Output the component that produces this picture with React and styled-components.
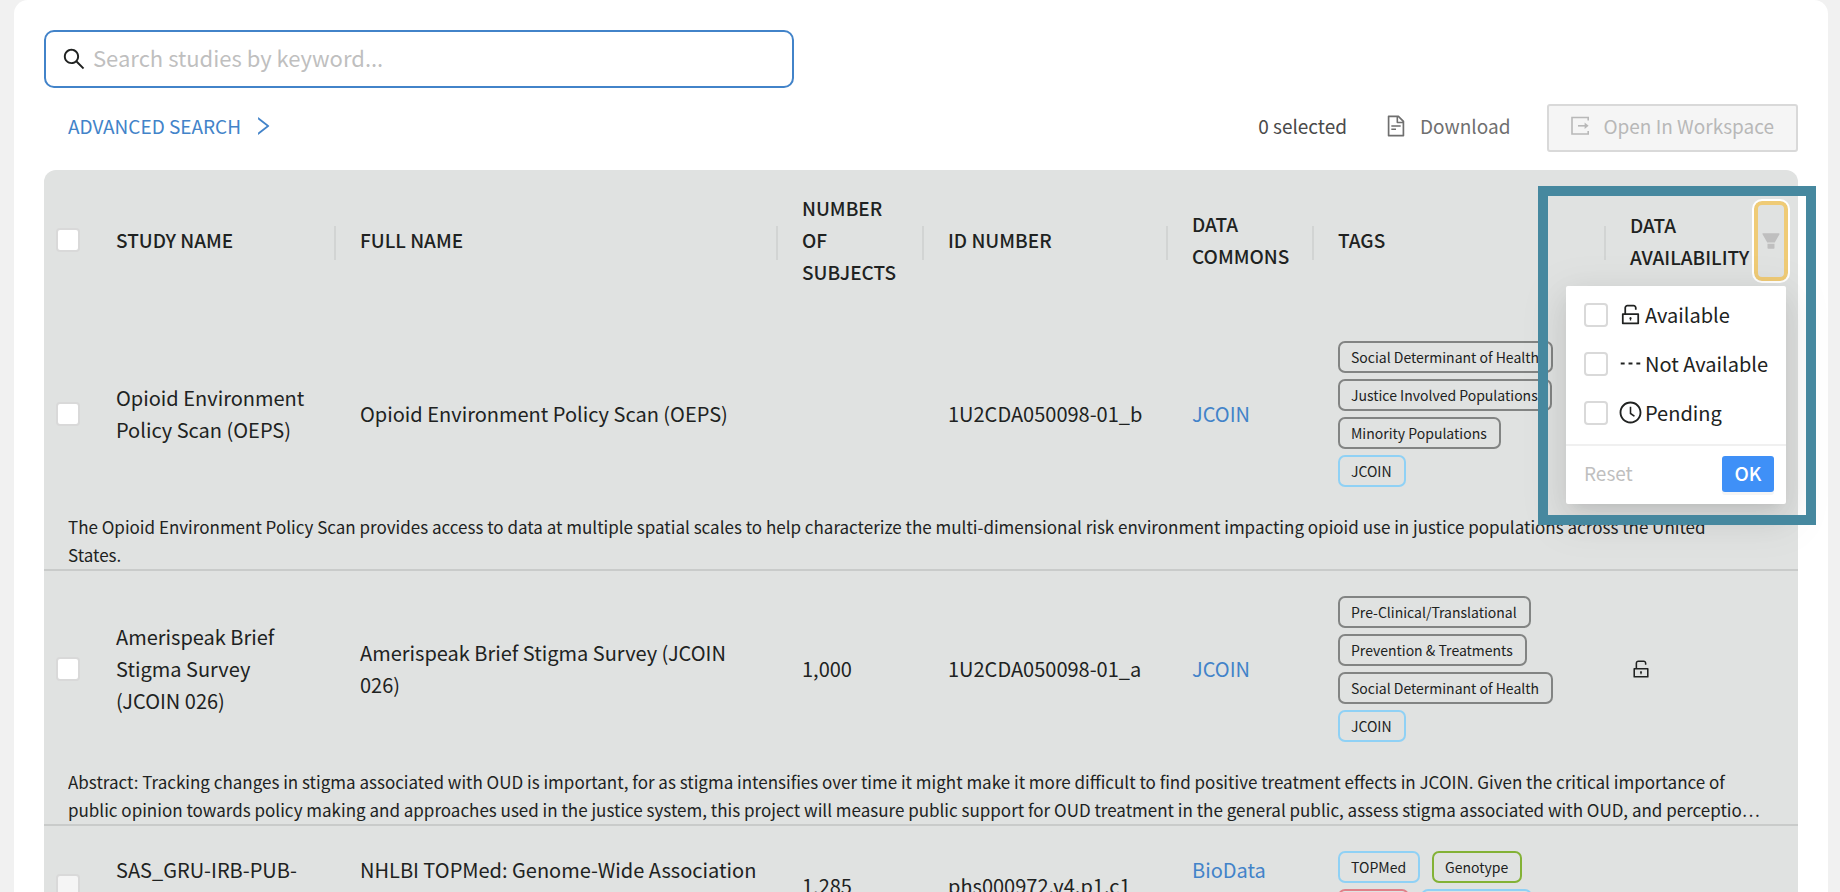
import React from "react";
import styled, { createGlobalStyle, css } from "styled-components";
import {
  AiFillFilter,
  AiOutlineClockCircle,
  AiOutlineDash,
  AiOutlineFileText,
  AiOutlineRight,
  AiOutlineSearch,
  AiOutlineUnlock,
} from "react-icons/ai";

const color = {
  page: "#f1f1f1",
  link: "#4283c9",
  text: "#202221",
  table: "#e0e2e1",
  line: "#c9cbca",
  border: "#d9d9d9",
  muted: "#bfbfbf",
  frame: "#46889f",
};

const GlobalStyle = createGlobalStyle`
  *, *::before, *::after { box-sizing: border-box; }
  body {
    margin: 0;
    background: ${color.page};
    color: ${color.text};
    font-family: "Noto Sans CJK SC", "Noto Sans", sans-serif;
    font-size: 20px;
    line-height: 32px;
  }
  button, input { font: inherit; }
  svg { flex: none; display: block; }
`;

const Page = styled.div`
  height: 100vh;
  overflow: hidden;
  padding: 0 12px 0 14px;
`;

const Card = styled.main`
  padding: 30px;
  background: #fff;
  border-radius: 14px;
`;

const SearchBox = styled.label`
  display: flex;
  align-items: center;
  gap: 6px;
  max-width: 750px;
  height: 58px;
  padding: 0 15px;
  border: 2px solid ${color.link};
  border-radius: 10px;
`;

const SearchInput = styled.input`
  flex: 1;
  min-width: 0;
  padding: 0 0 4px;
  border: 0;
  outline: 0;
  background: none;
  font-size: 22px;
  color: ${color.text};
  &::placeholder { color: ${color.muted}; opacity: 1; }
`;

const Toolbar = styled.div`
  display: flex;
  align-items: center;
  margin: 16px 0 18px;
  font-size: 19px;
`;

const AdvancedButton = styled.button`
  display: flex;
  align-items: center;
  gap: 10px;
  padding: 0 24px 4px;
  border: 0;
  background: none;
  color: ${color.link};
`;

const Actions = styled.div`
  display: flex;
  align-items: center;
  gap: 37px;
  margin-left: auto;
`;

const Selected = styled.span`
  padding-bottom: 4px;
  color: #4a4a4a;
`;

const ActionButton = styled.button`
  display: flex;
  align-items: center;
  gap: 12px;
  height: 48px;
  padding: 0 0 4px;
  border: 0;
  background: none;
  color: #6f6f6f;
  ${(p) =>
    p.$boxed &&
    css`
      padding: 0 22px 4px 20px;
      border: 2px solid ${color.border};
      border-radius: 3px;
      background: #f5f5f5;
      color: #b8b8b8;
    `}
`;

const Table = styled.table`
  width: 100%;
  table-layout: fixed;
  border-spacing: 0;
  background: ${color.table};
  border-radius: 12px 12px 0 0;
`;

const Col = styled.col`
  width: ${(p) => (p.$width ? `${p.$width}px` : "auto")};
`;

const HeadCell = styled.th`
  position: relative;
  height: 146px;
  padding: 0 24px 6px;
  text-align: left;
  font-size: 19px;
  font-weight: 500;
  background: ${(p) =>
    p.$divided ? `linear-gradient(#d2d4d3, #d2d4d3) right center / 2px 34px no-repeat` : "none"};
  ${(p) => p.$select && "padding: 0 12px 6px;"}
  ${(p) => p.$filter && "padding: 0 8px 4px 24px;"}
`;

const FilterHead = styled.div`
  display: flex;
  align-items: center;
  justify-content: space-between;
`;

const FilterButton = styled.button`
  display: flex;
  align-items: center;
  justify-content: center;
  flex: none;
  width: 38px;
  height: 84px;
  padding: 0;
  border: 2px solid #fff;
  border-radius: 10px;
  background: none;
  box-shadow: inset 0 0 0 4px #efcb76;
  color: ${color.muted};
`;

const Cell = styled.td`
  height: ${(p) => (p.$short ? 122 : 197)}px;
  padding: 0 24px 2px;
  vertical-align: middle;
  ${(p) => p.$select && "padding: 0 12px 2px;"}
  ${(p) => p.$long && "padding-right: 12px;"}
`;

const SummaryCell = styled.td`
  padding: 0 24px;
  border-bottom: 2px solid ${color.line};
  font-size: 17px;
  line-height: 28px;
`;

const Summary = styled.div`
  display: -webkit-box;
  height: 56px;
  overflow: hidden;
  white-space: pre-line;
  -webkit-box-orient: vertical;
  -webkit-line-clamp: 2;
`;

const Checkbox = styled.input.attrs({ type: "checkbox" })`
  appearance: none;
  display: block;
  flex: none;
  width: 24px;
  height: 24px;
  margin: 0;
  border: 2px solid ${color.border};
  border-radius: 4px;
  background: #fff;
  &:checked { background: #3f90f7; }
  &:disabled { background: #f5f5f5; }
`;

const Link = styled.a`
  color: ${color.link};
  text-decoration: none;
`;

const TagList = styled.div`
  display: flex;
  flex-wrap: wrap;
  gap: 6px 12px;
  max-width: 232px;
`;

const tagColor = { grey: "#828483", blue: "#8fd1f5", green: "#83b236", red: "#e08088" };

const Tag = styled.span`
  height: 32px;
  padding: 0 12px 0 11px;
  border: 2px solid ${(p) => tagColor[p.$tone]};
  border-radius: 7px;
  font-size: 14px;
  line-height: 28px;
  white-space: nowrap;
`;

const Highlight = styled.div`
  position: absolute;
  top: 16px;
  left: -68px;
  right: -18px;
  height: 339px;
  border: 10px solid ${color.frame};
  pointer-events: none;
`;

const Menu = styled.div`
  position: absolute;
  top: 116px;
  right: 12px;
  width: 220px;
  padding-top: 4px;
  background: #fff;
  border-radius: 2px;
  font-size: 20px;
  font-weight: 400;
  box-shadow: 0 6px 12px -8px rgba(0, 0, 0, 0.12), 0 12px 32px rgba(0, 0, 0, 0.08),
    0 12px 44px 12px rgba(0, 0, 0, 0.05);
`;

const Option = styled.label`
  display: flex;
  align-items: center;
  height: 49px;
  padding: 0 18px;
  white-space: nowrap;
`;

const OptionIcon = styled.span`
  margin: 0 2px 0 10px;
`;

const MenuFooter = styled.div`
  display: flex;
  align-items: center;
  justify-content: space-between;
  margin-top: 7px;
  padding: 10px 12px 12px 18px;
  border-top: 2px solid #f0f0f0;
  font-size: 19px;
`;

const ResetButton = styled.button`
  padding: 0 0 2px;
  border: 0;
  background: none;
  color: ${color.muted};
`;

const OkButton = styled.button`
  width: 52px;
  height: 36px;
  padding: 0 0 2px;
  border: 0;
  border-radius: 3px;
  background: #3f90f7;
  color: #fff;
  font-weight: 500;
  box-shadow: 0 3px 0 rgba(0, 0, 0, 0.04);
`;

const columns = [
  { label: "STUDY NAME", width: 244 },
  { label: "FULL NAME" },
  { label: "NUMBER OF SUBJECTS", width: 146 },
  { label: "ID NUMBER", width: 244 },
  { label: "DATA COMMONS", width: 146 },
  { label: "TAGS", width: 292 },
];

const studies = [
  {
    name: "Opioid Environment Policy Scan (OEPS)",
    fullName: "Opioid Environment Policy Scan (OEPS)",
    subjects: "",
    id: "1U2CDA050098-01_b",
    commons: "JCOIN",
    tags: [
      ["Social Determinant of Health", "grey"],
      ["Justice Involved Populations", "grey"],
      ["Minority Populations", "grey"],
      ["JCOIN", "blue"],
    ],
    summary:
      "The Opioid Environment Policy Scan provides access to data at multiple spatial scales to help characterize the multi-dimensional risk environment impacting opioid use in justice populations across the United\nStates.",
  },
  {
    name: "Amerispeak Brief Stigma Survey (JCOIN 026)",
    fullName: "Amerispeak Brief Stigma Survey (JCOIN 026)",
    subjects: "1,000",
    id: "1U2CDA050098-01_a",
    commons: "JCOIN",
    available: true,
    tags: [
      ["Pre-Clinical/Translational", "grey"],
      ["Prevention & Treatments", "grey"],
      ["Social Determinant of Health", "grey"],
      ["JCOIN", "blue"],
    ],
    summary:
      "Abstract: Tracking changes in stigma associated with OUD is important, for as stigma intensifies over time it might make it more difficult to find positive treatment effects in JCOIN. Given the critical importance of public opinion towards policy making and approaches used in the justice system, this project will measure public support for OUD treatment in the general public, assess stigma associated with OUD, and perceptio…",
  },
  {
    name: "SAS_GRU-IRB-PUB-COL-NPU-GSO",
    fullName: "NHLBI TOPMed: Genome-Wide Association Study of Adiposity in Samoans",
    subjects: "1,285",
    id: "phs000972.v4.p1.c1",
    commons: "BioData Catalyst",
    locked: true,
    tags: [
      ["TOPMed", "blue"],
      ["Genotype", "green"],
      ["dbGaP", "red"],
      ["Parent Study", "blue"],
    ],
  },
];

const options = [
  { label: "Available", Icon: AiOutlineUnlock },
  { label: "Not Available", Icon: AiOutlineDash },
  { label: "Pending", Icon: AiOutlineClockCircle },
];

function ExportIcon() {
  return (
    <svg width="22" height="22" viewBox="0 0 22 22" fill="none" stroke="currentColor" strokeWidth="1.6">
      <path d="M19.2 5.5V2.5H3V19H19.2V16" />
      <path d="M9 10.8H17.5" />
      <path d="M15.6 7.6L19.6 10.8L15.6 14Z" fill="currentColor" stroke="none" />
    </svg>
  );
}

function AvailabilityFilter() {
  return (
    <>
      <FilterHead>
        DATA AVAILABILITY
        <FilterButton type="button" aria-label="Filter by data availability">
          <AiFillFilter size={22} />
        </FilterButton>
      </FilterHead>
      <Menu>
        {options.map(({ label, Icon }) => (
          <Option key={label}>
            <Checkbox />
            <OptionIcon>
              <Icon size={25} />
            </OptionIcon>
            {label}
          </Option>
        ))}
        <MenuFooter>
          <ResetButton type="button" disabled>Reset</ResetButton>
          <OkButton type="button">OK</OkButton>
        </MenuFooter>
      </Menu>
      <Highlight />
    </>
  );
}

function StudyRows({ study }) {
  const short = !study.summary;
  return (
    <>
      <tr>
        <Cell $select $short={short}>
          <Checkbox aria-label={`Select ${study.name}`} disabled={study.locked} />
        </Cell>
        <Cell $short={short}>{study.name}</Cell>
        <Cell $long $short={short}>{study.fullName}</Cell>
        <Cell $short={short}>{study.subjects}</Cell>
        <Cell $short={short}>{study.id}</Cell>
        <Cell $short={short}>
          <Link href="#">{study.commons}</Link>
        </Cell>
        <Cell $short={short}>
          <TagList>
            {study.tags.map(([label, tone]) => (
              <Tag key={label} $tone={tone}>{label}</Tag>
            ))}
          </TagList>
        </Cell>
        <Cell $short={short}>{study.available && <AiOutlineUnlock size={22} />}</Cell>
      </tr>
      {study.summary && (
        <tr>
          <SummaryCell colSpan={8}>
            <Summary>{study.summary}</Summary>
          </SummaryCell>
        </tr>
      )}
    </>
  );
}

export default function App() {
  return (
    <Page>
      <GlobalStyle />
      <Card>
        <SearchBox>
          <AiOutlineSearch size={26} />
          <SearchInput type="text" placeholder="Search studies by keyword..." aria-label="Search studies" />
        </SearchBox>
        <Toolbar>
          <AdvancedButton type="button">
            ADVANCED SEARCH
            <AiOutlineRight size={24} />
          </AdvancedButton>
          <Actions>
            <Selected>0 selected</Selected>
            <ActionButton type="button">
              <AiOutlineFileText size={24} />
              Download
            </ActionButton>
            <ActionButton type="button" $boxed disabled>
              <ExportIcon />
              Open In Workspace
            </ActionButton>
          </Actions>
        </Toolbar>
        <Table>
          <colgroup>
            <Col $width={48} />
            {columns.map((c) => (
              <Col key={c.label} $width={c.width} />
            ))}
            <Col $width={192} />
          </colgroup>
          <thead>
            <tr>
              <HeadCell $select>
                <Checkbox aria-label="Select all studies" />
              </HeadCell>
              {columns.map((c) => (
                <HeadCell key={c.label} $divided>{c.label}</HeadCell>
              ))}
              <HeadCell $filter>
                <AvailabilityFilter />
              </HeadCell>
            </tr>
          </thead>
          <tbody>
            {studies.map((s) => (
              <StudyRows key={s.id} study={s} />
            ))}
          </tbody>
        </Table>
      </Card>
    </Page>
  );
}
